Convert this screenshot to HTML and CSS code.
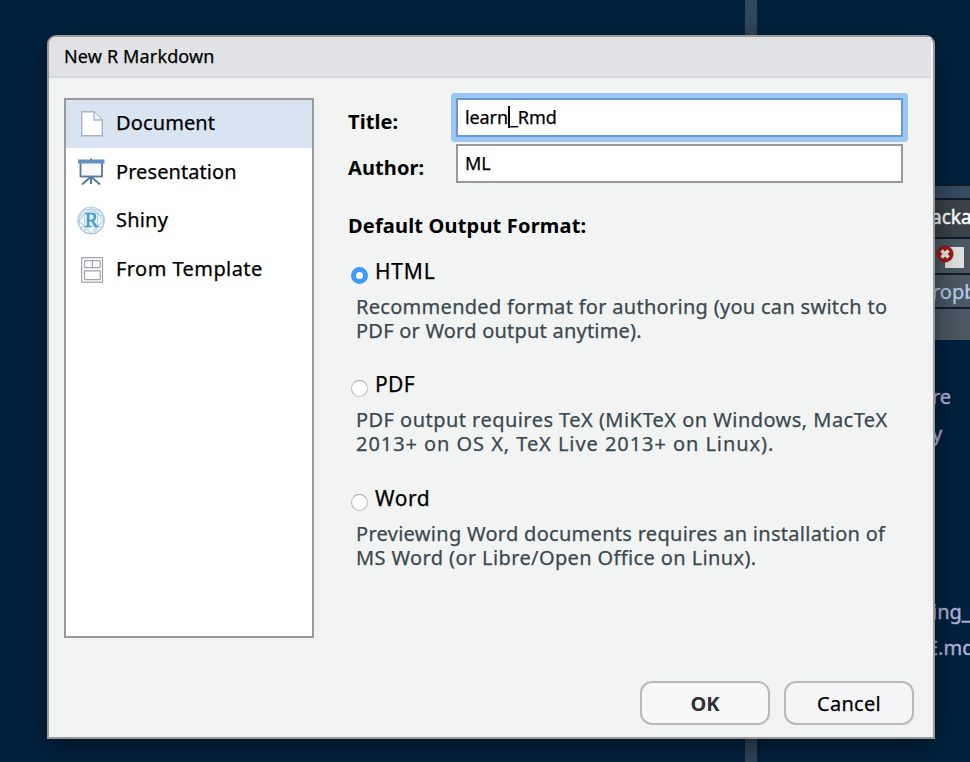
FILE: index.html
```html
<!DOCTYPE html>
<html lang="en">
<head>
<meta charset="utf-8">
<title>New R Markdown</title>
<link rel="stylesheet" href="styles.css">
</head>
<body>
<div class="workspace">
  <div class="editor"></div>
  <div class="splitter"></div>
  <div class="files">
    <div class="spacer"></div>
    <div class="strip window-bar"></div>
    <div class="strip tabs"><span>ackages</span></div>
    <div class="strip tools">
      <svg width="36" height="35" viewBox="0 0 36 35"><rect x="10" y="8" width="19" height="21" fill="#e4e3e0"/><circle cx="10" cy="15" r="8.500" fill="#9a1d1b"/><path d="M6.500 11.500l7 7M13.500 11.500l-7 7" stroke="#f4e9e7" stroke-width="3.600"/></svg>
    </div>
    <div class="strip path"><span>ropbox</span></div>
    <div class="strip columns"></div>
    <ul class="file-list">
      <li class="f1">re</li>
      <li class="f2">y</li>
      <li class="f3">ing_</li>
      <li class="f4">E.md</li>
    </ul>
  </div>
</div>

<div class="dialog">
  <div class="caption"><span>New R Markdown</span></div>
  <div class="body">
    <ul class="kinds">
      <li class="selected">
        <svg width="28" height="30" viewBox="-1 0 28 30"><path d="M3.700 2.700H16l8.300 8.300v15.800H3.700z" fill="#fff" stroke="#a9b4bf" stroke-width="1.400"/><path d="M16 3v8h8" fill="#f4f6f8" stroke="#a9b4bf" stroke-width="1.300"/></svg>
        <span class="k1">Document</span>
      </li>
      <li>
        <svg width="28" height="30" viewBox="0 0 28 30"><path d="M14 1.500v3M14 19v8M13.500 20l-8.500 7.500M14.500 20l8.500 7.500" stroke="#54789f" stroke-width="2" fill="none"/><rect x="3.500" y="5" width="21.500" height="14.500" fill="#f8f9fa" stroke="#54789f" stroke-width="1.800"/><rect x="1" y="2.500" width="26.500" height="4" fill="#6390c2"/></svg>
        <span class="k2">Presentation</span>
      </li>
      <li>
        <svg width="28" height="30" viewBox="0 0 28 30"><g fill="none" stroke="#a5c6df" stroke-width="0.900"><circle cx="14" cy="14.500" r="13.500" fill="#f1f7fb"/><path d="M7 3.500L22 4l5 7-1 10-8 7-10-1-6-8 1-10zM14 1.500L7 9 1 15l7 5 6 8 6-8 7-5-6-7zM7 3.500L7 9l7-4 7 3 1-4M3 9h4l1 11-5 2M8 20l0 7M8 20l12 0 6 2M20 20l-2 8M20 20l1-12 6 3"/></g><text x="14.300" y="21" text-anchor="middle" class="r-mark">R</text></svg>
        <span class="k3">Shiny</span>
      </li>
      <li>
        <svg width="28" height="30" viewBox="-1 0 28 30"><g fill="#fff" stroke="#9ba3ac" stroke-width="1.200"><rect x="3.700" y="2.700" width="20.800" height="24.500"/><rect x="6.500" y="5.600" width="15.800" height="7" rx="0.800"/><path d="M14.400 5.600v7"/><rect x="6.500" y="15.800" width="15.800" height="8.800" rx="0.800"/></g></svg>
        <span class="k4">From Template</span>
      </li>
    </ul>
    <div class="form">
      <div class="field title-field"><label>Title:</label><div class="input focused"><span class="t1">learn</span><i class="caret"></i><span class="t2">_Rmd</span></div></div>
      <div class="field author-field"><label>Author:</label><div class="input"><span class="t3">ML</span></div></div>
      <div class="heading">Default Output Format:</div>
      <div class="option">
        <div class="choice"><i class="radio on"></i><span class="o1">HTML</span></div>
        <p class="note"><span class="d1">Recommended format for authoring (you can switch to</span><span class="d2">PDF or Word output anytime).</span></p>
      </div>
      <div class="option">
        <div class="choice"><i class="radio"></i><span class="o2">PDF</span></div>
        <p class="note"><span class="d3">PDF output requires TeX (MiKTeX on Windows, MacTeX</span><span class="d4">2013+ on OS X, TeX Live 2013+ on Linux).</span></p>
      </div>
      <div class="option">
        <div class="choice"><i class="radio"></i><span class="o3">Word</span></div>
        <p class="note"><span class="d5">Previewing Word documents requires an installation of</span><span class="d6">MS Word (or Libre/Open Office on Linux).</span></p>
      </div>
    </div>
  </div>
  <div class="actions">
    <div class="button ok"><span>OK</span></div>
    <div class="button cancel"><span>Cancel</span></div>
  </div>
</div>
</body>
</html>
```
FILE: styles.css
```css
* { box-sizing: border-box; }
body {
  margin: 0;
  width: 970px;
  height: 762px;
  overflow: hidden;
  position: relative;
  font-family: "Noto Sans", sans-serif;
  font-size: 20px;
  color: #000;
  white-space: nowrap;
  -webkit-text-stroke: 0.25px;
}
ul { list-style: none; margin: 0; padding: 0; }
i { display: block; }
svg { display: block; flex: none; }

.workspace { display: grid; grid-template-columns: 745px 12px 213px; height: 762px; background: #002240; }
.splitter { background: #34475b; }
.files { overflow: hidden; padding-left: 175px; }
.spacer { height: 184px; }
.strip { margin-left: -175px; padding-left: 175px; background: #4c5963; border-top: 2px solid #101d2a; display: flex; align-items: center; overflow: hidden; }
.window-bar { height: 14px; background: #374b63; }
.tabs { height: 39px; background: #3a444a; color: #fff; font-size: 19px; -webkit-text-stroke: 0.5px; }
.tabs span { margin-top: -3px; margin-left: -1px; }
.tools { height: 36px; padding-left: 178px; }
.path { height: 34px; color: #b8d0ee; font-size: 20px; }
.columns { height: 33px; }
.file-list { color: #b7b3dd; font-size: 20px; line-height: 36px; -webkit-text-stroke: 0.4px; }
.f1 { padding-top: 39px; }
.f2 { margin-top: 1px; }
.f3 { padding-top: 142px; }
.f4 { margin-left: -5px; }

.dialog {
  position: absolute;
  left: 47px;
  top: 35px;
  width: 888px;
  height: 704px;
  border: 2px solid #999;
  border-radius: 9px 9px 0 0;
  background: #f2f4f4;
  box-shadow: 0 8px 30px rgba(0, 0, 0, 0.5);
}
.caption {
  width: 882px;
  height: 41px;
  padding-left: 15px;
  background: #e1e2e5;
  border-bottom: 2px solid #d6d7da;
  border-radius: 7px 0 0 0;
  font-size: 18px;
  line-height: 38px;
  letter-spacing: 0.150px;
}
.body { display: flex; margin-top: 20px; padding-left: 15px; }
.kinds { width: 250px; height: 540px; border: 2px solid #999; background: #fff; }
.kinds li { height: 48.700px; padding-left: 12px; display: flex; align-items: center; gap: 10px; line-height: 30px; }
.kinds svg { margin-left: -1px; margin-right: 1px; }
.kinds li span { margin-top: -2px; }
.kinds .selected { background: #d8e4f1; height: 48px; }
.kinds .k1 { letter-spacing: 0.120px; }
.kinds .k2 { letter-spacing: 0.080px; margin-top: 0; }
.kinds .k3 { letter-spacing: 0.200px; }
.kinds .k4 { letter-spacing: 0.430px; }
.r-mark { font-family: "Liberation Serif", serif; font-size: 20px; fill: #3a9bd0; stroke: #3a9bd0; stroke-width: 0.600px; }

.form { width: 560px; margin-left: 34px; }
.field { display: flex; height: 39px; align-items: center; }
.field label { width: 108px; font-weight: 700; padding-top: 8px; letter-spacing: 0.100px; -webkit-text-stroke: 0; }
.author-field { margin-top: 7px; }
.input { width: 447px; height: 39px; border: 2px solid #999; background: #fff; display: flex; align-items: center; padding-left: 7px; font-size: 18px; }
.input span { margin-top: -2px; letter-spacing: -0.100px; }
.focused { border-color: #6c98cc; box-shadow: 0 0 0 5px #9bc7f7; border-radius: 1px; }
.caret { width: 2px; height: 22px; background: #000; margin-top: -1px; }
.heading { margin-top: 28px; height: 30px; line-height: 30px; font-weight: 700; letter-spacing: 0.180px; -webkit-text-stroke: 0; }
.option { height: 113px; padding-top: 15px; }
.option + .option { height: 114px; }
.choice { display: flex; height: 30px; line-height: 30px; font-size: 21px; gap: 7px; padding-left: 3px; }
.radio { width: 17px; height: 17px; margin-top: 11px; border-radius: 50%; border: 1px solid #bdbdbd; border-top-color: #a5a5a5; background: #fff; }
.radio.on { border: 5.500px solid #3f99f7; }
.note { margin: 9px 0 0 8px; color: #3b484f; line-height: 24px; }
.note span { display: block; height: 24px; }
.o1 { letter-spacing: 0.800px; }
.o2 { letter-spacing: 0.400px; }
.o3 { letter-spacing: 0.600px; }
.d1 { letter-spacing: 0.290px; }
.d2 { letter-spacing: 0.220px; }
.d3 { letter-spacing: 0.460px; }
.d4 { letter-spacing: 0.940px; }
.d5 { letter-spacing: 0.290px; }
.d6 { letter-spacing: 0.380px; }

.actions { display: flex; justify-content: flex-end; gap: 14px; margin-top: 43px; padding-right: 19px; }
.button { width: 130px; height: 44px; border: 2px solid #b9b9b9; border-radius: 12px; background: #f8f8f8; display: flex; align-items: center; justify-content: center; }
.ok { color: #2c2f33; font-weight: 700; -webkit-text-stroke: 0; }
.cancel { background: #f5f5f8; letter-spacing: 0.300px; }
```
